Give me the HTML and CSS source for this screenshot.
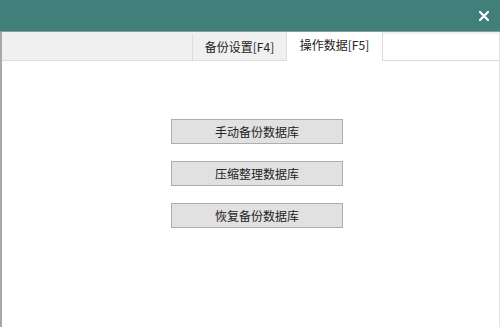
FILE: index.html
```html
<!DOCTYPE html>
<html>
<head>
<meta charset="utf-8">
<link rel="stylesheet" href="styles.css">
</head>
<body>
<div class="window">
  <div class="titlebar">
    <span class="close">
      <svg width="10" height="10" viewBox="0 0 10 10"><path d="M1 1 L9 9 M9 1 L1 9" stroke="#fff" stroke-width="2.2" stroke-linecap="square"/></svg>
    </span>
  </div>
  <div class="body">
    <div class="tabstrip">
      <div class="spacer"></div>
      <div class="tab">备份设置[F4]</div>
      <div class="tab active">操作数据[F5]</div>
      <div class="rest"></div>
    </div>
    <div class="panel">
      <button class="btn">手动备份数据库</button>
      <button class="btn">压缩整理数据库</button>
      <button class="btn">恢复备份数据库</button>
    </div>
  </div>
</div>
</body>
</html>
```

FILE: styles.css
```css
html, body {
  margin: 0;
  padding: 0;
  width: 500px;
  height: 327px;
  overflow: hidden;
  background: #fff;
  font-family: "Noto Sans CJK SC", "Noto Sans", sans-serif;
}
.window {
  display: flex;
  flex-direction: column;
  width: 500px;
  height: 327px;
}
.titlebar {
  height: 31px;
  background: #417f7a;
  display: flex;
  align-items: center;
  justify-content: flex-end;
  padding-right: 11px;
  border-bottom: 1px solid #8a9a98;
  flex-shrink: 0;
}
.close {
  display: flex;
}
.body {
  flex: 1;
  display: flex;
  flex-direction: column;
  border-left: 2px solid #a8a8a8;
  border-right: 1px solid #e4e4e4;
}
.tabstrip {
  display: flex;
  height: 28px;
  background: #f0f0f0;
  border-bottom: 1px solid #dcdcdc;
  flex-shrink: 0;
}
.spacer {
  width: 190px;
}
.tab {
  width: 93px;
  margin-top: 2px;
  border-left: 1px solid #dcdcdc;
  display: flex;
  align-items: center;
  justify-content: center;
  font-size: 12px;
  color: #222;
  padding-bottom: 1px;
}
.tab.active {
  width: 95px;
  margin-top: 0;
  margin-bottom: -1px;
  background: #fff;
  border-right: 1px solid #dcdcdc;
  padding-bottom: 4px;
}
.rest {
  flex: 1;
  background: #fff;
  margin-top: 2px;
}
.panel {
  flex: 1;
  display: flex;
  flex-direction: column;
  align-items: flex-start;
  gap: 17px;
  padding-top: 58px;
  padding-left: 169px;
}
.btn {
  width: 172px;
  height: 25px;
  margin: 0;
  padding: 0;
  background: #e1e1e1;
  border: 1px solid #adadad;
  font-family: "Noto Sans CJK SC", "Noto Sans", sans-serif;
  font-size: 12px;
  color: #222;
}
```
